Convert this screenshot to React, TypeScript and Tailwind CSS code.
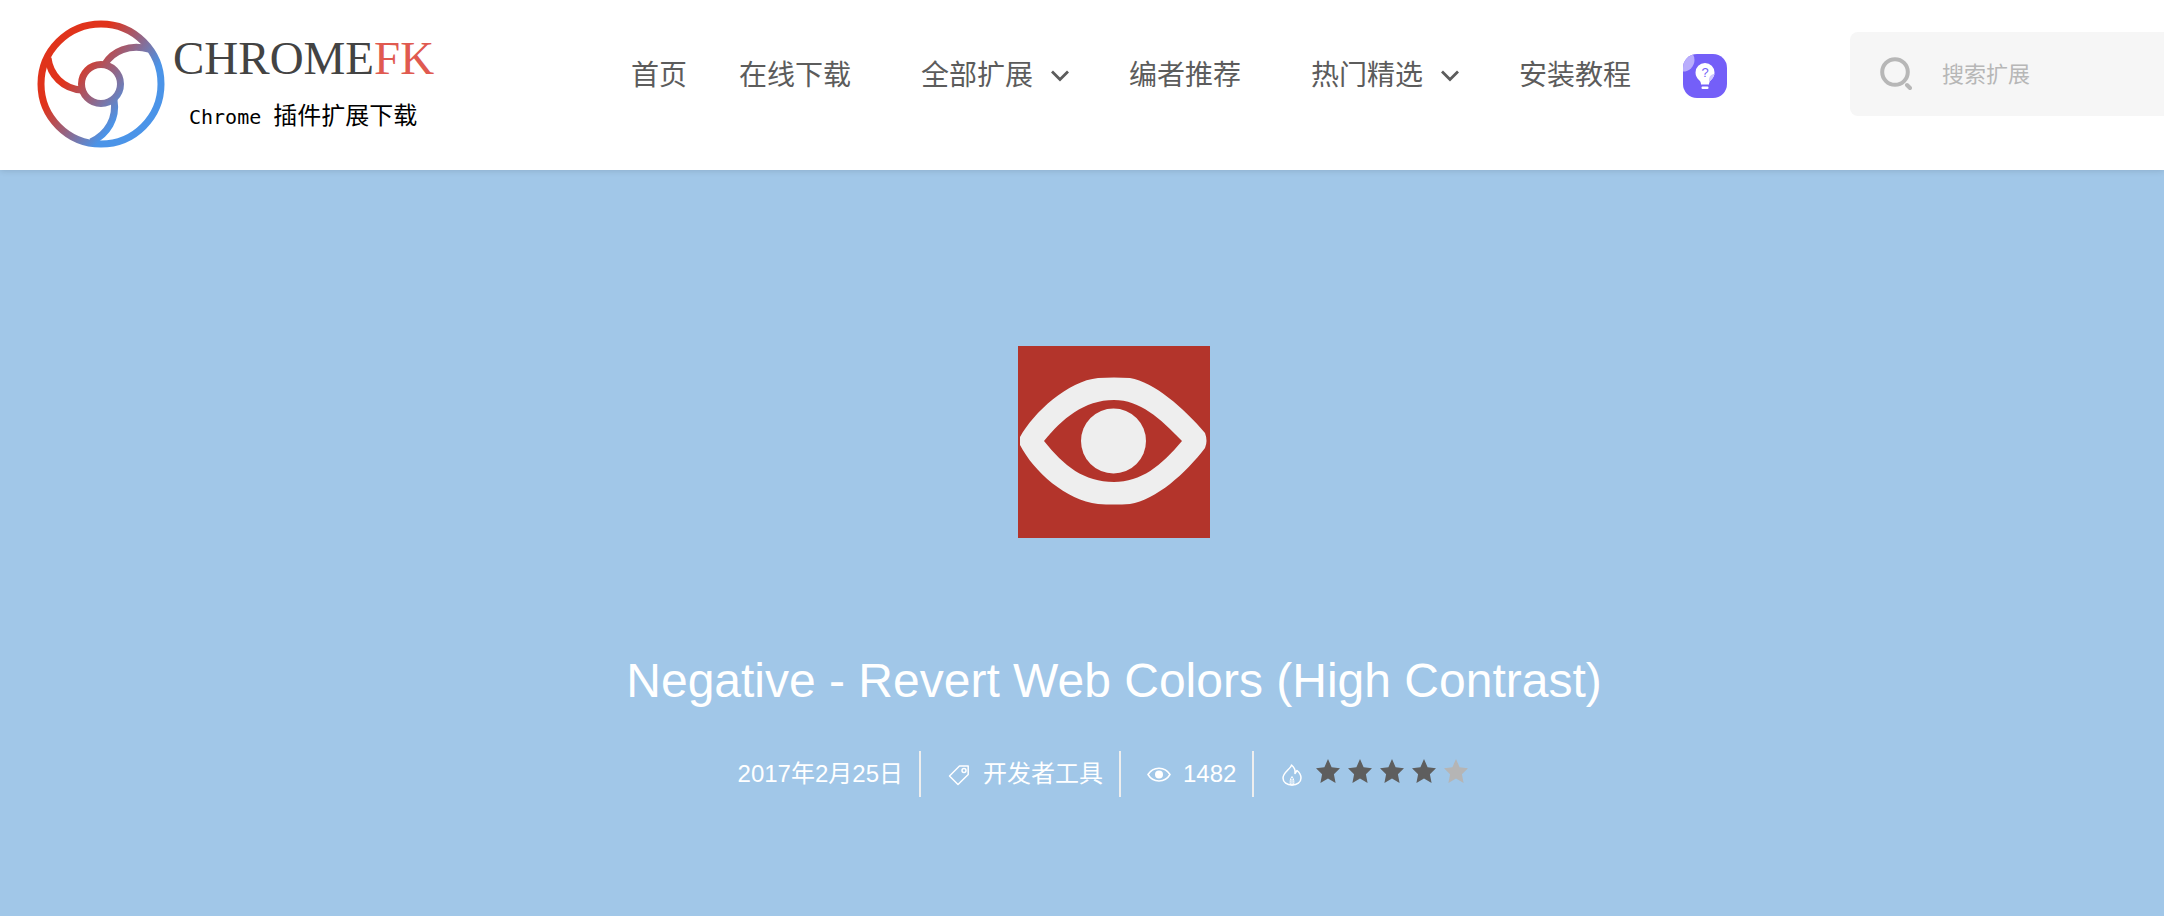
import type { ReactNode } from 'react'

type NavItem = { name: string; href: string; dropdown?: boolean }

const navItems: NavItem[] = [
  { name: '首页', href: '#home' },
  { name: '在线下载', href: '#download' },
  { name: '全部扩展', href: '#extensions', dropdown: true },
  { name: '编者推荐', href: '#editor' },
  { name: '热门精选', href: '#popular', dropdown: true },
  { name: '安装教程', href: '#install' },
]

const extension = {
  title: 'Negative - Revert Web Colors (High Contrast)',
  date: '2017年2月25日',
  category: '开发者工具',
  views: 1482,
  rating: 4,
}

function LogoMark() {
  return (
    <svg viewBox="0 0 128 128" className="h-32 w-32 shrink-0" fill="none" strokeWidth="7" aria-hidden="true">
      <defs>
        <linearGradient id="logo" gradientUnits="userSpaceOnUse" x1="40" y1="45" x2="91" y2="85">
          <stop offset="0" stopColor="#e0331b" />
          <stop offset="1" stopColor="#4b94e8" />
        </linearGradient>
      </defs>
      <g stroke="url(#logo)">
        <circle cx="64" cy="64" r="60" />
        <circle cx="64" cy="64" r="19.5" />
        <path d="M68 44C76 31 92 24 112 29" />
        <path d="M11 38C13 55 26 69 45 70" />
        <path d="M77 80C80 98 71 114 54 122" />
      </g>
    </svg>
  )
}

function Chevron() {
  return (
    <svg viewBox="0 0 18 12" className="h-3 w-[18px]" fill="none" stroke="currentColor" strokeWidth="2.8" aria-hidden="true">
      <path d="M1 1.5L9 9.5L17 1.5" />
    </svg>
  )
}

function BulbIcon() {
  return (
    <svg viewBox="0 0 44 44" className="h-11 w-11" aria-hidden="true">
      <defs>
        <clipPath id="tile">
          <rect width="44" height="44" rx="14" />
        </clipPath>
      </defs>
      <g clipPath="url(#tile)">
        <rect width="44" height="44" fill="#745ff8" />
        <circle cx="0" cy="6" r="11.5" fill="#b9adfc" />
      </g>
      <path d="M22 9a9.5 9.5 0 0 0-9.5 9.5c0 3.5 1.700 5.600 3.200 7.300 1.500 1.200 2.300 2.400 2.300 4.700h8c0-2.300.8-3.500 2.300-4.700 1.500-1.700 3.200-3.800 3.200-7.300A9.500 9.500 0 0 0 22 9z" fill="#fff" />
      <path d="M31.400 20c-3 0-5.400 2.600-5.400 6v4.500c0-2.300.8-3.500 2.300-4.700 1.300-1.500 2.700-3.300 3.100-5.800z" fill="#cfc7fd" />
      <rect x="18.500" y="32.500" width="7" height="2.500" rx="1" fill="#fff" />
      <text x="22" y="23" textAnchor="middle" fontFamily="Liberation Sans, sans-serif" fontSize="13" fill="#745ff8">?</text>
    </svg>
  )
}

function SearchIcon() {
  return (
    <svg viewBox="0 0 32 34" className="h-[34px] w-8 shrink-0" fill="none" stroke="#b7b7b7" strokeWidth="4" strokeLinecap="round" aria-hidden="true">
      <circle cx="15" cy="15" r="12.800" />
      <path d="M27 28L30 31" />
    </svg>
  )
}

function ExtensionIcon() {
  return (
    <svg viewBox="0 0 192 192" className="h-48 w-48" role="img" aria-label={extension.title}>
      <rect width="192" height="192" fill="#b3342b" />
      <path
        fillRule="evenodd"
        fill="#eee"
        d="M2 91C16 66 50 35 80 32Q96 31 112 32C136 36 166 62 187 87Q190 95 187 102C168 127 138 154 112 158Q96 159 80 158C48 154 16 126 2 99ZM26 95C46 120 66 136 96 136C123 136 143 120 164 95C142 72 122 54 96 54C66 54 44 73 26 95Z"
      />
      <circle cx="95.500" cy="95" r="32.500" fill="#eee" />
    </svg>
  )
}

function TagIcon() {
  return (
    <svg viewBox="0 0 24 24" className="h-6 w-6" fill="none" stroke="#fff" strokeWidth="1.5" strokeLinejoin="round" aria-hidden="true">
      <path d="M12.500 4H21.200V12.500L11 22.500L2.500 14Z" />
      <circle cx="17" cy="8.500" r="2" />
    </svg>
  )
}

function EyeIcon() {
  return (
    <svg viewBox="0 0 24 24" className="h-6 w-6" fill="none" stroke="#fff" strokeWidth="1.5" aria-hidden="true">
      <path d="M1 12.500C6 4 18 4 23 12.500C18 21 6 21 1 12.500Z" />
      <circle cx="12" cy="12.500" r="4" fill="#fff" stroke="none" />
    </svg>
  )
}

function FlameIcon() {
  return (
    <svg viewBox="0 0 24 24" className="h-6 w-6" fill="none" stroke="#fff" strokeWidth="1.5" strokeLinejoin="round" aria-hidden="true">
      <path d="M11.500 3C11 6.500 3 10.500 3 16C3 20.300 7 23 12 23C17 23 21 20.300 21 16C21 12.500 19.500 10.500 17 8.500L15 11.500C15.500 8 14 5 11.500 3Z" />
      <path d="M12 14.500C10 17 9.800 20 10.500 23H13.500C14.200 20 14 17 12 14.500ZM12 17V23" strokeWidth="1" />
    </svg>
  )
}

function Star({ filled }: { filled: boolean }) {
  return (
    <svg viewBox="0 0 24 24" className={filled ? 'h-6 w-6 text-[#5e5e5e]' : 'h-6 w-6 text-[#b5b5b5]'} fill="currentColor" aria-hidden="true">
      <path d="M12 0L15.600 8.200L24 9.200L17.900 15.200L19.600 24L12 19.600L4.400 24L6.100 15.200L0 9.200L8.400 8.200Z" />
    </svg>
  )
}

function MetaItem({ icon, children }: { icon: ReactNode; children: ReactNode }) {
  return (
    <li className="flex h-[46px] items-center gap-3 border-r-2 border-[#eee] pr-4 pl-[26px]">
      {icon}
      {children}
    </li>
  )
}

function Header() {
  return (
    <header className="relative z-10 flex h-[170px] items-start bg-white pl-[37px] shadow-[0_1px_6px_rgba(0,0,0,0.12)]">
      <a href="#home" className="flex w-[594px] shrink-0 items-center gap-2 pt-5">
        <LogoMark />
        <span className="flex flex-col pb-1">
          <span className="font-['Liberation_Serif',serif] text-[47px] leading-[52px] text-[#434343]">
            CHROME<span className="text-[#e05a50]">FK</span>
          </span>
          <span className="flex items-baseline pt-4 pl-4 leading-8 whitespace-pre text-black">
            <span className="font-['DejaVu_Sans_Mono',monospace] text-xl leading-8">Chrome </span>
            <span className="text-2xl leading-8">插件扩展下载</span>
          </span>
        </span>
      </a>

      <nav className="flex h-[152px] shrink-0 items-center gap-[52px] text-[28px] leading-[44px] text-[#5c5c5c]">
        {navItems.map((item) =>
          item.dropdown ? (
            <button key={item.name} type="button" className="mr-2 ml-[18px] flex items-center gap-[18px]">
              {item.name}
              <Chevron />
            </button>
          ) : (
            <a key={item.name} href={item.href}>
              {item.name}
            </a>
          )
        )}
        <button type="button" aria-label="帮助">
          <BulbIcon />
        </button>
      </nav>

      {/* Search */}
      <label className="mt-8 ml-[123px] flex h-[84px] min-w-0 flex-1 items-center gap-[30px] rounded-l-lg bg-[#f6f6f6] pl-[30px]">
        <SearchIcon />
        <input
          type="search"
          aria-label="搜索扩展"
          placeholder="搜索扩展"
          className="min-w-0 flex-1 bg-transparent pt-0.5 text-[22px] leading-8 outline-none placeholder:text-[#b7b7b7]"
        />
      </label>
    </header>
  )
}

function Hero() {
  return (
    <section className="flex flex-col items-center bg-[#a1c7e8] pt-44 pb-[119px] pl-16 text-white">
      <ExtensionIcon />
      <h1 className="mt-[107px] text-5xl leading-[72px]">{extension.title}</h1>
      <ul className="mt-[34px] flex items-center text-2xl leading-9">
        <li className="flex h-[46px] items-center border-r-2 border-[#eee] pr-4">{extension.date}</li>
        <MetaItem icon={<TagIcon />}>
          <a href="#category">{extension.category}</a>
        </MetaItem>
        <MetaItem icon={<EyeIcon />}>{extension.views}</MetaItem>
        <li className="flex items-center gap-3 pr-[22px] pl-[26px]">
          <FlameIcon />
          <span className="flex gap-2 pb-1.5" role="img" aria-label={`${extension.rating} / 5`}>
            {[1, 2, 3, 4, 5].map((n) => (
              <Star key={n} filled={n <= extension.rating} />
            ))}
          </span>
        </li>
      </ul>
    </section>
  )
}

export default function App() {
  return (
    <div className="min-h-screen bg-[#a1c7e8] font-['Liberation_Sans','Noto_Sans_CJK_SC',sans-serif]">
      <Header />
      <main>
        <Hero />
      </main>
    </div>
  )
}
